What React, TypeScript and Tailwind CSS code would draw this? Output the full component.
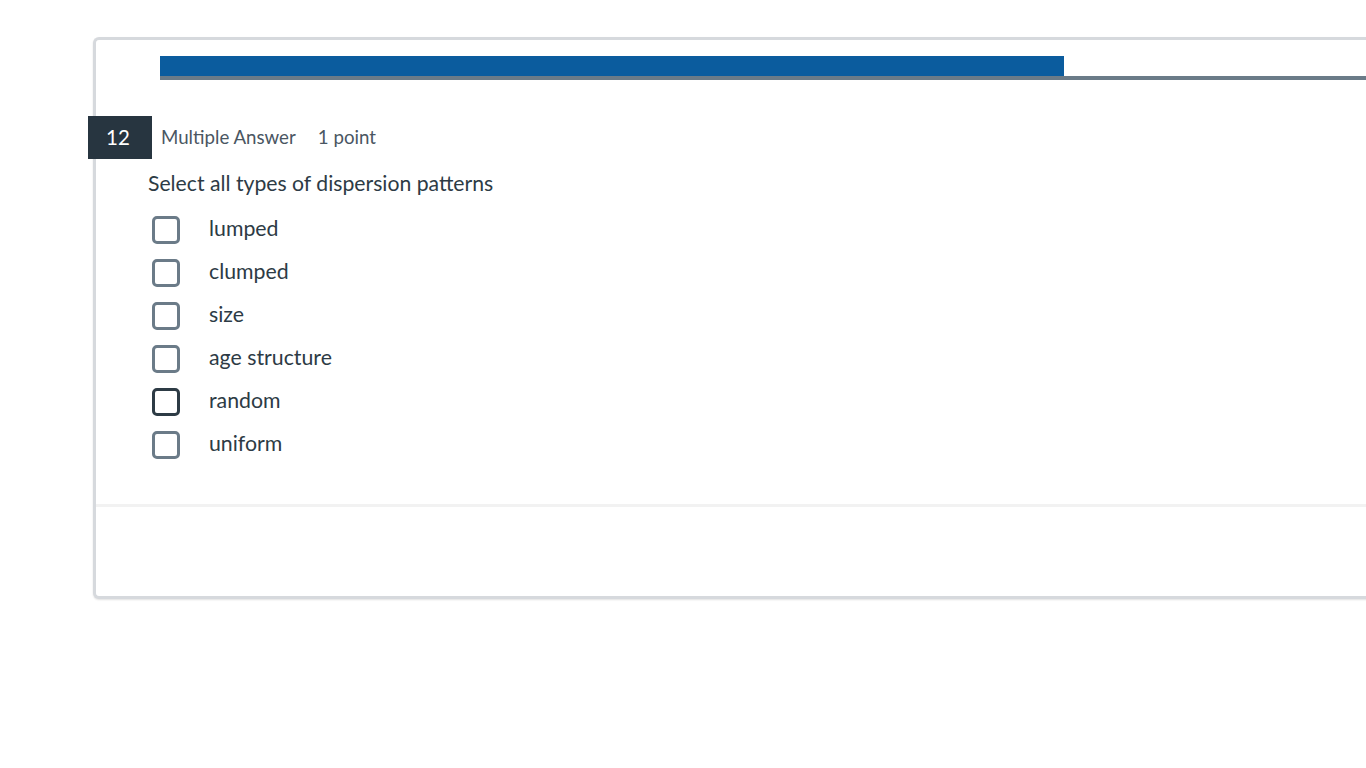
import React from 'react'

type Choice = {
  label: string
  focused?: boolean
}

const choices: Choice[] = [
  { label: 'lumped' },
  { label: 'clumped' },
  { label: 'size' },
  { label: 'age structure' },
  { label: 'random', focused: true },
  { label: 'uniform' },
]

function ChoiceRow({ choice }: { choice: Choice }) {
  return (
    <label className="flex items-center h-[43px] cursor-pointer">
      <span
        className={
          choice.focused
            ? 'w-[28px] h-[28px] rounded-[5px] border-[3px] border-[#2d3b45] bg-white'
            : 'w-[28px] h-[28px] rounded-[5px] border-[3px] border-[#6b7b88] bg-white'
        }
      />
      <span className="ml-[29px] text-[21.3px] text-[#2d3b45] leading-none -mt-[2px]">{choice.label}</span>
    </label>
  )
}

export default function App() {
  return (
    <div
      className="w-[1366px] h-[768px] bg-white overflow-hidden"
      style={{ fontFamily: 'Lato, "Liberation Sans", sans-serif' }}
    >
      <div className="ml-[93px] mt-[37px] w-[1320px] border-l-[3px] border-t-[3px] border-b-[3px] border-[#d6d9dd] rounded-tl-[6px] rounded-bl-[6px] shadow-[0_1px_2px_rgba(0,0,0,0.12)] bg-white">
        {/* progress */}
        <div className="pt-[16px] pl-[64px]">
          <div className="w-[904px] h-[20px] bg-[#0b5c9e]" />
          <div className="h-[4px] bg-[#6b7b88]" />
        </div>

        {/* question header */}
        <div className="mt-[36px] flex items-center -ml-[8px]">
          <div className="w-[64px] h-[43px] bg-[#273540] text-white text-[20.5px] flex items-center justify-center pr-[4px]">
            12
          </div>
          <span className="ml-[9px] text-[18.7px] text-[#4a5662]">Multiple Answer</span>
          <span className="ml-[22px] text-[18.7px] text-[#4a5662]">1 point</span>
        </div>

        {/* question body */}
        <div className="pl-[52px] pt-[11px]">
          <p className="text-[21.2px] text-[#2d3b45] leading-[26px]">Select all types of dispersion patterns</p>
          <div className="mt-[12px] pl-[4px]">
            {choices.map((c) => (
              <ChoiceRow key={c.label} choice={c} />
            ))}
          </div>
        </div>

        <div className="mt-[38px] h-[3px] bg-[#f2f2f2]" />
        <div className="h-[89px]" />
      </div>
    </div>
  )
}
